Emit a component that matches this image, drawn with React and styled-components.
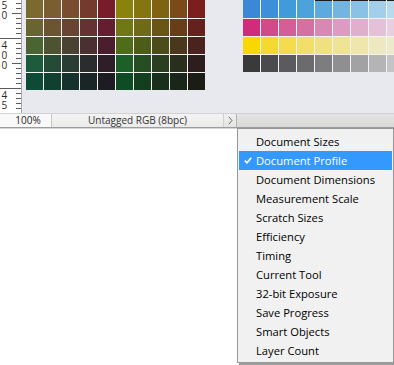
import React from "react";
import styled, { createGlobalStyle } from "styled-components";

/**
 * Swatch colours of the two patches on the canvas
 */
const warmRows = [
  ["#7a6a30", "#7a5d30", "#7a4d30", "#743a2e", "#781c2c", "#8a820c", "#857510", "#7f6212", "#7a4a18", "#7a1e1e"],
  ["#6a6432", "#6a5432", "#6a4432", "#643232", "#641e30", "#707815", "#6e6a15", "#6a5515", "#683e1a", "#66201e"],
  ["#4c6432", "#4c5232", "#4c4232", "#4a3030", "#4a1e2c", "#4e6c1a", "#4e5c1a", "#4c4c1a", "#4a381c", "#4a221e"],
  ["#1e5a3c", "#264a38", "#2a3c34", "#2a2c2e", "#2e1e28", "#1e5e28", "#264e24", "#2a3e20", "#2a2e1e", "#2c1e1c"],
  ["#0e4a36", "#124030", "#16322c", "#1a2626", "#1c1c22", "#0e4c26", "#143e20", "#18301c", "#1a261a", "#1c1c16"],
];

const inkRows = [
  ["#3a88d6", "#3c8fd8", "#419ada", "#4ea2dc", "#5eaade", "#72b5e2", "#8ac2e6", "#a3cfea", "#b9d9ed"],
  ["#d02c7a", "#d24b89", "#d45e97", "#d570a3", "#d888b3", "#dc9bbf", "#e0afcb", "#e4c1d7", "#e8cfdf"],
  ["#f8d800", "#f5d92e", "#f4dc4e", "#f2df68", "#f0e180", "#efe398", "#eee6ad", "#ede8bf", "#ece9cc"],
  ["#3a3a3c", "#4b4b4d", "#5b5b5d", "#6b6b6d", "#7d7d7f", "#8f8f91", "#a2a2a4", "#b4b4b6", "#c4c4c6"],
];

const menuItems = [
  "Document Sizes",
  "Document Profile",
  "Document Dimensions",
  "Measurement Scale",
  "Scratch Sizes",
  "Efficiency",
  "Timing",
  "Current Tool",
  "32-bit Exposure",
  "Save Progress",
  "Smart Objects",
  "Layer Count",
];

/**
 * Ruler labels: each number is written top to bottom, one digit under the other
 */
const rulerLabels = [
  { digits: ["5", "0"], y: 9 },
  { digits: ["4", "0", "0"], y: 49 },
  { digits: ["4", "5"], y: 99 },
];

/**
 * Page reset
 */
const GlobalStyle = createGlobalStyle`
  html, body {
    margin: 0;
    padding: 0;
    background: #fff;
  }
  body {
    font-family: "Open Sans", "Segoe UI", sans-serif;
  }
`;

const Screen = styled.div`
  position: relative;
  width: 394px;
  height: 365px;
  overflow: hidden;
  background: #fff;
`;

const DocWindow = styled.div`
  display: flex;
  flex-direction: column;
`;

const Workspace = styled.div`
  display: flex;
  height: 113px;
  overflow: hidden;
  background: #e7e9ef;
`;

const RulerBox = styled.svg`
  display: block;
  flex: none;
  width: 21px;
  height: 113px;
  background: #fff;
  border-right: 1px solid #a9a9a9;
`;

const RulerDigit = styled.text`
  font-family: "Open Sans", sans-serif;
  font-size: 10px;
  fill: #2a2a2a;
`;

const Canvas = styled.div`
  display: flex;
  align-items: flex-start;
  gap: 38px;
  padding-left: 4px;
`;

const SwatchGrid = styled.div`
  display: grid;
  grid-template-columns: repeat(${(p) => p.$cols}, 17px);
  grid-template-rows: 18px repeat(${(p) => p.$rows - 1}, 17px);
  gap: 1px;
  flex: none;
  background: #f3f3f1;
`;

const Swatch = styled.div`
  background: ${(p) => p.$color};
  box-shadow: ${(p) => (p.$dark ? "inset 0 1px 0 #1c1c1c" : "none")};
`;

const StatusBar = styled.div`
  display: flex;
  height: 13px;
  border-top: 1px solid #d2d2d2;
  border-bottom: 1px solid #9c9c9c;
  box-shadow: 0 1px 0 #d4d4d4;
  font-size: 10px;
  line-height: 13px;
  color: #333;
`;

const ZoomField = styled.div`
  width: 46px;
  padding-left: 5px;
  text-align: center;
  background: #f9f9f9;
  border-right: 1px solid #c6c6c6;
  color: #222;
`;

const ProfileField = styled.div`
  width: 171px;
  text-align: center;
  background: linear-gradient(#f3f3f3, #ebebeb);
`;

const MenuButton = styled.div`
  display: flex;
  align-items: center;
  justify-content: center;
  width: 12px;
  border-left: 1px solid #cfcfcf;
  border-right: 1px solid #b4b4b4;
  background: linear-gradient(#f0f0f0, #e4e4e4);
`;

const Filler = styled.div`
  flex: 1;
  background: linear-gradient(#e4e4e4, #d9d9d9);
`;

const Menu = styled.ul`
  position: absolute;
  left: 237px;
  top: 128px;
  width: 153px;
  margin: 0;
  padding: 3px 1px 2px;
  list-style: none;
  background: #f1f1f1;
  border: 1px solid #979797;
  box-shadow: 2px 2px 0 #9c9c9c;
  font-size: 11.2px;
  color: #000;
`;

const MenuItem = styled.li`
  position: relative;
  height: 19px;
  line-height: 19px;
  padding-left: 17px;
  white-space: nowrap;
  background: ${(p) => (p.$active ? "#3399ff" : "transparent")};
  color: ${(p) => (p.$active ? "#fff" : "inherit")};
`;

const Check = styled.svg`
  position: absolute;
  left: 5px;
  top: 6px;
`;

/**
 * Vertical ruler with ticks and stacked digits
 */
const Ruler = () => {
  const ticks = [];
  for (let y = -12; y <= 113; y += 5) {
    const step = (y + 12) % 50;
    const x1 = step === 0 ? 0 : step === 25 ? 12 : 16;
    ticks.push(<line key={y} x1={x1} x2={21} y1={y + 0.5} y2={y + 0.5} stroke="#5a5a5a" strokeWidth="1" />);
  }
  return (
    <RulerBox viewBox="0 0 21 113">
      {ticks}
      {rulerLabels.map((label) => (
        <RulerDigit key={label.y} x="1.5" y={label.y}>
          {label.digits.map((d, i) => (
            <tspan key={i} x="1.5" dy={i === 0 ? 0 : 10}>
              {d}
            </tspan>
          ))}
        </RulerDigit>
      ))}
    </RulerBox>
  );
};

const App = () => {
  return (
    <Screen>
      <GlobalStyle />
      <DocWindow>
        <Workspace>
          <Ruler />
          <Canvas>
            <SwatchGrid $cols={10} $rows={5}>
              {warmRows.flatMap((row, r) =>
                row.map((c, i) => <Swatch key={`${r}-${i}`} $color={c} />)
              )}
            </SwatchGrid>
            <SwatchGrid $cols={9} $rows={4}>
              {inkRows.flatMap((row, r) =>
                row.map((c, i) => <Swatch key={`${r}-${i}`} $color={c} $dark={r === 0 && i >= 4} />)
              )}
            </SwatchGrid>
          </Canvas>
        </Workspace>
        <StatusBar>
          <ZoomField>100%</ZoomField>
          <ProfileField>Untagged RGB (8bpc)</ProfileField>
          <MenuButton>
            <svg width="5" height="9" viewBox="0 0 5 9">
              <polyline points="0.8,0.8 4,4.5 0.8,8.2" fill="none" stroke="#6a6a6a" strokeWidth="1" />
            </svg>
          </MenuButton>
          <Filler />
        </StatusBar>
      </DocWindow>
      <Menu>
        {menuItems.map((label) => {
          const active = label === "Document Profile";
          return (
            <MenuItem key={label} $active={active}>
              {active && (
                <Check width="8" height="7" viewBox="0 0 8 7">
                  <path d="M0.8 3.6 L3 5.8 L7.2 0.8" fill="none" stroke="#fff" strokeWidth="1.7" />
                </Check>
              )}
              {label}
            </MenuItem>
          );
        })}
      </Menu>
    </Screen>
  );
};

export default App;
